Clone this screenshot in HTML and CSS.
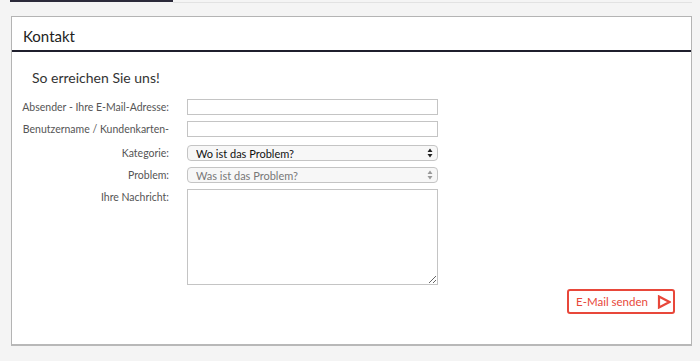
FILE: index.html
```html
<!DOCTYPE html>
<html>
<head>
    <title>Kontakt</title>
    <link rel="stylesheet" href="styles.css">
</head>
<body>
    <div id="tab-strip">
        <div class="tab active"></div>
        <div class="tab rest"></div>
    </div>

    <div id="contact-panel">
        <h2 id="panel-title">Kontakt</h2>
        <div id="panel-body">
            <p id="intro">So erreichen Sie uns!</p>
            <form id="contact-form">
                <div class="row">
                    <label class="label">Absender - Ihre E-Mail-Adresse:</label>
                    <input class="field" type="text">
                </div>
                <div class="row">
                    <label class="label">Benutzername / Kundenkarten-</label>
                    <input class="field" type="text">
                </div>
                <div class="row spaced">
                    <label class="label">Kategorie:</label>
                    <div class="select-wrap">
                        <select class="field select">
                            <option>Wo ist das Problem?</option>
                        </select>
                        <svg class="arrows" width="6" height="10" viewBox="0 0 6 10"><path d="M3 0.5 L5.5 4 L0.5 4 Z M3 9.5 L5.5 6 L0.5 6 Z" fill="#222"/></svg>
                    </div>
                </div>
                <div class="row">
                    <label class="label">Problem:</label>
                    <div class="select-wrap">
                        <select class="field select muted">
                            <option>Was ist das Problem?</option>
                        </select>
                        <svg class="arrows" width="6" height="10" viewBox="0 0 6 10"><path d="M3 0.5 L5.5 4 L0.5 4 Z M3 9.5 L5.5 6 L0.5 6 Z" fill="#999"/></svg>
                    </div>
                </div>
                <div class="row top">
                    <label class="label">Ihre Nachricht:</label>
                    <textarea class="field message"></textarea>
                </div>
                <div class="actions">
                    <button class="send" type="button">E-Mail senden
                        <svg width="14" height="14" viewBox="0 0 14 14"><path d="M2 1.5 L12.5 7 L2 12.5 Z" fill="none" stroke="#e8473a" stroke-width="2.2"/></svg>
                    </button>
                </div>
            </form>
        </div>
    </div>
</body>
</html>
```

FILE: styles.css
```css
body {
    margin: 0;
    padding: 0;
    background-color: #f4f4f4;
    font-family: Lato, "Open Sans", sans-serif;
    color: #333;
}

#tab-strip {
    display: flex;
    padding: 0 8px 0 10px;
}

.tab {
    height: 2px;
}

.tab.active {
    width: 163px;
    background-color: #2b2a3a;
}

.tab.rest {
    flex: 1;
    border-bottom: 1px solid #e2e2e2;
}

#contact-panel {
    margin: 13px 8px 0 11px;
    background-color: #fff;
    border: 1px solid #b4b4b4;
    border-bottom: 2px solid #b8b8b8;
    height: 330px;
    box-sizing: border-box;
}

#panel-title {
    margin: 0;
    padding: 11px 0 6px 11px;
    font-size: 15px;
    font-weight: normal;
    color: #222;
    border-bottom: 2px solid #1f1f2d;
    line-height: 16px;
}

#panel-body {
    padding: 0 16px 0 0;
}

#intro {
    margin: 0;
    padding: 18px 0 0 20px;
    font-size: 14px;
    color: #333;
    line-height: 16px;
}

#contact-form {
    margin-top: 13px;
}

.row {
    display: flex;
    align-items: center;
    margin-bottom: 6px;
}

.row.spaced {
    margin-top: 8px;
}

.row.top {
    align-items: flex-start;
}

.label {
    width: 157px;
    text-align: right;
    font-size: 10.5px;
    color: #555;
    line-height: 16px;
    margin-right: 18px;
    white-space: nowrap;
}

.field {
    width: 251px;
    height: 16px;
    box-sizing: border-box;
    border: 1px solid #c4c4c4;
    background-color: #fff;
    margin: 0;
    font-family: Lato, "Open Sans", sans-serif;
}

.select-wrap {
    position: relative;
    display: flex;
}

.select {
    appearance: none;
    -webkit-appearance: none;
    border-radius: 4px;
    font-size: 11px;
    color: #111;
    padding: 0 0 0 8px;
    background-color: #f7f7f7;
}

.select.muted {
    color: #777;
}

.arrows {
    position: absolute;
    right: 5px;
    top: 3px;
    pointer-events: none;
}

.message {
    height: 96px;
    resize: both;
}

.actions {
    display: flex;
    justify-content: flex-end;
    margin-top: -2px;
}

.send {
    display: flex;
    align-items: center;
    justify-content: space-between;
    width: 108px;
    height: 25px;
    padding: 0 2px 0 7px;
    background-color: #fff;
    border: 2px solid #e8473a;
    border-radius: 3px;
    color: #e8473a;
    font-family: Lato, "Open Sans", sans-serif;
    font-size: 11.5px;
    white-space: nowrap;
    cursor: pointer;
}
```
